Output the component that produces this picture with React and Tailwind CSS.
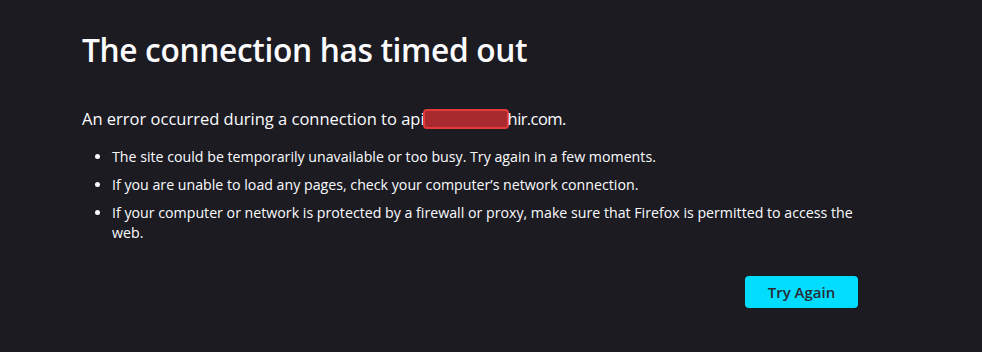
export default function App() {
  return (
    <div
      className="min-h-[352px] w-full bg-[#1c1b22] text-[#fbfbfe]"
      style={{ fontFamily: '"Open Sans", "Noto Sans", sans-serif' }}
    >
      <div className="ml-[82px] w-[776px] pt-[28px]">
        <h1 className="text-[31.7px] font-semibold leading-[44px] tracking-[-0.35px]">
          The connection has timed out
        </h1>
        <p className="mt-[35px] flex items-center text-[16.5px] leading-[24px]">
          <span>An error occurred during a connection to api</span>
          <span className="-ml-[2px] inline-block h-[20px] w-[86px] rounded-[4px] border-2 border-[#e53a3a] bg-[#a8292e]" />
          <span className="-ml-[1px] tracking-[-0.6px]">hir.com.</span>
        </p>
        <ul className="-mr-[24px] mt-[16px] list-disc pl-[30px] text-[14.2px] leading-[20px]">
          <li className="mb-[8px]">The site could be temporarily unavailable or too busy. Try again in a few moments.</li>
          <li className="mb-[8px]">If you are unable to load any pages, check your computer’s network connection.</li>
          <li>
            If your computer or network is protected by a firewall or proxy, make sure that Firefox is permitted to access the web.
          </li>
        </ul>
        <div className="mt-[33px] flex justify-end">
          <button className="h-[32px] w-[113px] rounded-[4px] bg-[#00ddff] text-[15px] font-semibold text-[#2b2a33]">
            Try Again
          </button>
        </div>
      </div>
    </div>
  );
}
